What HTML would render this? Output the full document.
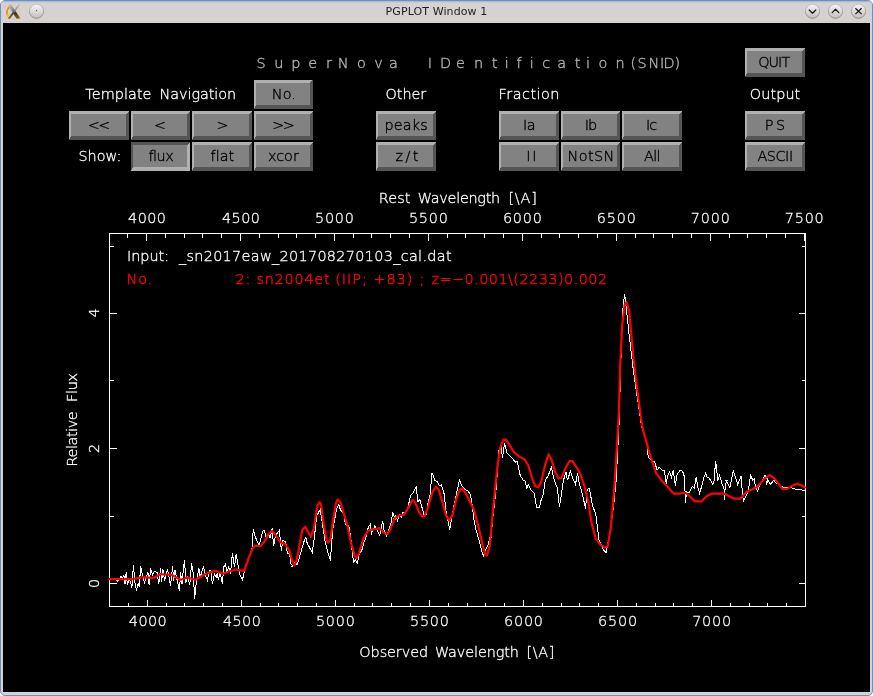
<!DOCTYPE html>
<html lang="en"><head><meta charset="utf-8"><title>PGPLOT Window 1</title>
<style>
html,body{margin:0;padding:0;background:#fff;}
body{width:873px;height:696px;overflow:hidden;position:relative;font-family:"DejaVu Sans Light", "DejaVu Sans", "Liberation Sans", sans-serif;}
#win{position:absolute;left:0;top:0;width:871px;height:694px;border:1px solid #6d8fc3;border-radius:5px;background:#d6d2d0;overflow:hidden;}
#topgrad{position:absolute;left:0;top:0;width:871px;height:2px;background:linear-gradient(#9db6d8,#d6d2d0);}
#ttl{position:absolute;left:0;top:0;width:873px;height:23px;line-height:23px;text-align:center;font-family:"DejaVu Sans","Liberation Sans",sans-serif;font-size:11px;letter-spacing:0.1px;color:#1e1e1e;will-change:transform;}
#cv{position:absolute;left:3px;top:23px;width:867px;height:669px;background:#000;}
svg{position:absolute;left:0;top:0;will-change:transform;}
svg text{font-family:"DejaVu Sans Light", "DejaVu Sans", "Liberation Sans", sans-serif;font-weight:200;font-size:14.4px;stroke-width:0.25px;}
.w{fill:#fff;stroke:#fff;stroke-width:0.3px;} .r{fill:#f00;stroke:#f00;stroke-width:0.45px;} .b{fill:#000;stroke:#000;stroke-width:0.35px;} .t{fill:#b0b0b0;stroke:#b0b0b0;stroke-width:0.4px;}
</style></head><body>
<div id="win"><div id="topgrad"></div></div>
<div id="ttl">PGPLOT Window 1</div>
<div id="cv"></div>
<svg width="873" height="23" viewBox="0 0 873 23">
<defs>
<linearGradient id="bg" x1="0" y1="0" x2="0" y2="1"><stop offset="0" stop-color="#f6f5f4"/><stop offset="0.5" stop-color="#dedbd9"/><stop offset="1" stop-color="#c2beba"/></linearGradient>
<linearGradient id="bs" x1="0" y1="0" x2="0" y2="1"><stop offset="0" stop-color="#c2beba"/><stop offset="1" stop-color="#8c8885"/></linearGradient>
<linearGradient id="xa" x1="0" y1="0" x2="1" y2="1"><stop offset="0" stop-color="#d0d0d0"/><stop offset="0.42" stop-color="#858585"/><stop offset="0.58" stop-color="#3a3222"/><stop offset="1" stop-color="#8f7410"/></linearGradient>
<linearGradient id="xb" x1="1" y1="0" x2="0" y2="1"><stop offset="0" stop-color="#c4c4c4"/><stop offset="0.45" stop-color="#8d8d8d"/><stop offset="0.6" stop-color="#4a3a22"/><stop offset="1" stop-color="#a06c08"/></linearGradient>
</defs>
<g fill="url(#bg)" stroke="url(#bs)" stroke-width="1">
<circle cx="36.5" cy="11.2" r="7.1"/><circle cx="812.5" cy="11.2" r="7.1"/><circle cx="835.5" cy="11.2" r="7.1"/><circle cx="858.5" cy="11.2" r="7.1"/>
</g>
<rect x="36" y="10.2" width="1" height="1.3" fill="#333"/><rect x="36" y="11.5" width="1" height="1" fill="#fff"/>
<g fill="none" stroke="#1c1c1c" stroke-width="1.3" stroke-linecap="round" stroke-linejoin="round">
<path d="M809.2 10 L812.5 13.3 L815.8 10"/>
<path d="M832.2 12.6 L835.5 9.3 L838.8 12.6"/>
<path d="M855.4 8.3 L861.6 14.1 M861.6 8.3 L855.4 14.1" stroke-linecap="butt"/>
</g>
<path d="M9 7.6 C6.2 10.2 6.2 14.4 8.8 17" fill="none" stroke="#f6820e" stroke-width="1.7" stroke-linecap="round"/>
<path d="M7.6 14.6 C8 15.8 8.6 16.6 9.6 17.4" fill="none" stroke="#ffd21e" stroke-width="1.2" stroke-linecap="round"/>
<path d="M19 8.2 C21 10.6 21 14 19.2 16.4" fill="none" stroke="#f3c078" stroke-width="0.8" stroke-linecap="round" opacity="0.85"/>
<path d="M7.6 4.8 L11 4.2 L20.4 18.2 L16.6 18.8 Z" fill="url(#xa)"/>
<path d="M18.8 4 L20.2 4.8 L10 18.8 L7.8 18.4 Z" fill="url(#xb)"/>

</svg>
<svg width="873" height="696" viewBox="0 0 873 696">
<g shape-rendering="crispEdges">
<rect x="254" y="79.5" width="59" height="29" fill="#828282"/>
<polygon points="254,79.5 313,79.5 310,82.5 256,82.5" fill="#b0b0b0"/>
<polygon points="254,79.5 256,82.5 256,104.5 254,108.5" fill="#b0b0b0"/>
<polygon points="254,108.5 256,104.5 310,104.5 313,108.5" fill="#555555"/>
<polygon points="313,79.5 313,108.5 310,104.5 310,82.5" fill="#555555"/>
<rect x="69" y="111" width="60" height="29" fill="#828282"/>
<polygon points="69,111 129,111 126,114 71,114" fill="#b0b0b0"/>
<polygon points="69,111 71,114 71,136 69,140" fill="#b0b0b0"/>
<polygon points="69,140 71,136 126,136 129,140" fill="#555555"/>
<polygon points="129,111 129,140 126,136 126,114" fill="#555555"/>
<rect x="131" y="111" width="59" height="29" fill="#828282"/>
<polygon points="131,111 190,111 187,114 133,114" fill="#b0b0b0"/>
<polygon points="131,111 133,114 133,136 131,140" fill="#b0b0b0"/>
<polygon points="131,140 133,136 187,136 190,140" fill="#555555"/>
<polygon points="190,111 190,140 187,136 187,114" fill="#555555"/>
<rect x="192" y="111" width="60" height="29" fill="#828282"/>
<polygon points="192,111 252,111 249,114 194,114" fill="#b0b0b0"/>
<polygon points="192,111 194,114 194,136 192,140" fill="#b0b0b0"/>
<polygon points="192,140 194,136 249,136 252,140" fill="#555555"/>
<polygon points="252,111 252,140 249,136 249,114" fill="#555555"/>
<rect x="254" y="111" width="59" height="29" fill="#828282"/>
<polygon points="254,111 313,111 310,114 256,114" fill="#b0b0b0"/>
<polygon points="254,111 256,114 256,136 254,140" fill="#b0b0b0"/>
<polygon points="254,140 256,136 310,136 313,140" fill="#555555"/>
<polygon points="313,111 313,140 310,136 310,114" fill="#555555"/>
<rect x="131" y="142" width="59" height="29" fill="#828282"/>
<polygon points="131,142 190,142 187,145 133,145" fill="#555555"/>
<polygon points="131,142 133,145 133,167 131,171" fill="#555555"/>
<polygon points="131,171 133,167 187,167 190,171" fill="#b0b0b0"/>
<polygon points="190,142 190,171 187,167 187,145" fill="#b0b0b0"/>
<rect x="192" y="142" width="60" height="29" fill="#828282"/>
<polygon points="192,142 252,142 249,145 194,145" fill="#b0b0b0"/>
<polygon points="192,142 194,145 194,167 192,171" fill="#b0b0b0"/>
<polygon points="192,171 194,167 249,167 252,171" fill="#555555"/>
<polygon points="252,142 252,171 249,167 249,145" fill="#555555"/>
<rect x="254" y="142" width="59" height="29" fill="#828282"/>
<polygon points="254,142 313,142 310,145 256,145" fill="#b0b0b0"/>
<polygon points="254,142 256,145 256,167 254,171" fill="#b0b0b0"/>
<polygon points="254,171 256,167 310,167 313,171" fill="#555555"/>
<polygon points="313,142 313,171 310,167 310,145" fill="#555555"/>
<rect x="376" y="111" width="60" height="29" fill="#828282"/>
<polygon points="376,111 436,111 433,114 378,114" fill="#b0b0b0"/>
<polygon points="376,111 378,114 378,136 376,140" fill="#b0b0b0"/>
<polygon points="376,140 378,136 433,136 436,140" fill="#555555"/>
<polygon points="436,111 436,140 433,136 433,114" fill="#555555"/>
<rect x="376" y="142" width="60" height="29" fill="#828282"/>
<polygon points="376,142 436,142 433,145 378,145" fill="#b0b0b0"/>
<polygon points="376,142 378,145 378,167 376,171" fill="#b0b0b0"/>
<polygon points="376,171 378,167 433,167 436,171" fill="#555555"/>
<polygon points="436,142 436,171 433,167 433,145" fill="#555555"/>
<rect x="499" y="111" width="60" height="29" fill="#828282"/>
<polygon points="499,111 559,111 556,114 501,114" fill="#b0b0b0"/>
<polygon points="499,111 501,114 501,136 499,140" fill="#b0b0b0"/>
<polygon points="499,140 501,136 556,136 559,140" fill="#555555"/>
<polygon points="559,111 559,140 556,136 556,114" fill="#555555"/>
<rect x="561" y="111" width="59" height="29" fill="#828282"/>
<polygon points="561,111 620,111 617,114 563,114" fill="#b0b0b0"/>
<polygon points="561,111 563,114 563,136 561,140" fill="#b0b0b0"/>
<polygon points="561,140 563,136 617,136 620,140" fill="#555555"/>
<polygon points="620,111 620,140 617,136 617,114" fill="#555555"/>
<rect x="622" y="111" width="60" height="29" fill="#828282"/>
<polygon points="622,111 682,111 679,114 624,114" fill="#b0b0b0"/>
<polygon points="622,111 624,114 624,136 622,140" fill="#b0b0b0"/>
<polygon points="622,140 624,136 679,136 682,140" fill="#555555"/>
<polygon points="682,111 682,140 679,136 679,114" fill="#555555"/>
<rect x="499" y="142" width="60" height="29" fill="#828282"/>
<polygon points="499,142 559,142 556,145 501,145" fill="#b0b0b0"/>
<polygon points="499,142 501,145 501,167 499,171" fill="#b0b0b0"/>
<polygon points="499,171 501,167 556,167 559,171" fill="#555555"/>
<polygon points="559,142 559,171 556,167 556,145" fill="#555555"/>
<rect x="561" y="142" width="59" height="29" fill="#828282"/>
<polygon points="561,142 620,142 617,145 563,145" fill="#b0b0b0"/>
<polygon points="561,142 563,145 563,167 561,171" fill="#b0b0b0"/>
<polygon points="561,171 563,167 617,167 620,171" fill="#555555"/>
<polygon points="620,142 620,171 617,167 617,145" fill="#555555"/>
<rect x="622" y="142" width="60" height="29" fill="#828282"/>
<polygon points="622,142 682,142 679,145 624,145" fill="#b0b0b0"/>
<polygon points="622,142 624,145 624,167 622,171" fill="#b0b0b0"/>
<polygon points="622,171 624,167 679,167 682,171" fill="#555555"/>
<polygon points="682,142 682,171 679,167 679,145" fill="#555555"/>
<rect x="745" y="48" width="60" height="29" fill="#828282"/>
<polygon points="745,48 805,48 802,51 747,51" fill="#b0b0b0"/>
<polygon points="745,48 747,51 747,73 745,77" fill="#b0b0b0"/>
<polygon points="745,77 747,73 802,73 805,77" fill="#555555"/>
<polygon points="805,48 805,77 802,73 802,51" fill="#555555"/>
<rect x="745" y="111" width="60" height="29" fill="#828282"/>
<polygon points="745,111 805,111 802,114 747,114" fill="#b0b0b0"/>
<polygon points="745,111 747,114 747,136 745,140" fill="#b0b0b0"/>
<polygon points="745,140 747,136 802,136 805,140" fill="#555555"/>
<polygon points="805,111 805,140 802,136 802,114" fill="#555555"/>
<rect x="745" y="142" width="60" height="29" fill="#828282"/>
<polygon points="745,142 805,142 802,145 747,145" fill="#b0b0b0"/>
<polygon points="745,142 747,145 747,167 745,171" fill="#b0b0b0"/>
<polygon points="745,171 747,167 802,167 805,171" fill="#555555"/>
<polygon points="805,142 805,171 802,167 802,145" fill="#555555"/>
</g>
<text x="271.80" y="98.5" class="b" style="letter-spacing:0.09px">No.</text>
<text x="87.87" y="130.0" class="b" style="letter-spacing:-1.60px">&lt;&lt;</text>
<text x="154.00" y="130.0" class="b">&lt;</text>
<text x="216.50" y="130.0" class="b">&gt;</text>
<text x="272.37" y="130.0" class="b" style="letter-spacing:-1.60px">&gt;&gt;</text>
<text x="148.40" y="161.0" class="b" style="letter-spacing:-0.46px">flux</text>
<text x="210.60" y="161.0" class="b" style="letter-spacing:0.04px">flat</text>
<text x="268.00" y="161.0" class="b" style="letter-spacing:-0.03px">xcor</text>
<text x="384.40" y="130.0" class="b" style="letter-spacing:0.21px">peaks</text>
<text x="395.45" y="161.0" class="b" style="letter-spacing:2.50px">z/t</text>
<text x="522.90" y="130.0" class="b" style="letter-spacing:-0.44px">Ia</text>
<text x="584.80" y="130.0" class="b" style="letter-spacing:-0.94px">Ib</text>
<text x="645.90" y="130.0" class="b" style="letter-spacing:-0.94px">Ic</text>
<text x="526.20" y="161.0" class="b" style="letter-spacing:1.76px">II</text>
<text x="567.60" y="161.0" class="b" style="letter-spacing:0.41px">NotSN</text>
<text x="644.00" y="161.0" class="b" style="letter-spacing:-0.67px">All</text>
<text x="758.20" y="67.0" class="b" style="letter-spacing:-0.97px">QUIT</text>
<text x="764.71" y="130.0" class="b" style="letter-spacing:2.50px">PS</text>
<text x="757.50" y="161.0" class="b" style="letter-spacing:-0.47px">ASCII</text>
<text x="85.30" y="99.0" class="w" style="letter-spacing:0.07px">Template</text>
<text x="159.60" y="99.0" class="w" style="letter-spacing:-0.06px">Navigation</text>
<text x="78.40" y="160.8" class="w" style="letter-spacing:0.04px">Show:</text>
<text x="385.60" y="99.0" class="w" style="letter-spacing:-0.09px">Other</text>
<text x="498.60" y="99.0" class="w" style="letter-spacing:0.48px">Fraction</text>
<text x="749.80" y="99.0" class="w" style="letter-spacing:0.09px">Output</text>
<text x="128.82" y="625.6" class="w" style="letter-spacing:0.44px">4000</text>
<text x="222.88" y="625.6" class="w" style="letter-spacing:0.44px">4500</text>
<text x="315.93" y="625.6" class="w" style="letter-spacing:0.78px">5000</text>
<text x="409.99" y="625.6" class="w" style="letter-spacing:0.78px">5500</text>
<text x="504.04" y="625.6" class="w" style="letter-spacing:0.78px">6000</text>
<text x="598.10" y="625.6" class="w" style="letter-spacing:0.78px">6500</text>
<text x="692.15" y="625.6" class="w" style="letter-spacing:0.78px">7000</text>
<text x="128.07" y="223.2" class="w" style="letter-spacing:0.44px">4000</text>
<text x="222.03" y="223.2" class="w" style="letter-spacing:0.44px">4500</text>
<text x="314.99" y="223.2" class="w" style="letter-spacing:0.78px">5000</text>
<text x="408.95" y="223.2" class="w" style="letter-spacing:0.78px">5500</text>
<text x="502.91" y="223.2" class="w" style="letter-spacing:0.78px">6000</text>
<text x="596.87" y="223.2" class="w" style="letter-spacing:0.78px">6500</text>
<text x="690.84" y="223.2" class="w" style="letter-spacing:0.78px">7000</text>
<text x="784.80" y="223.2" class="w" style="letter-spacing:0.78px">7500</text>
<text transform="translate(99.0,587.0) rotate(-90)" x="-1.00" y="0" class="w">0</text>
<text transform="translate(99.0,453.0) rotate(-90)" x="0.00" y="0" class="w">2</text>
<text transform="translate(99.0,318.0) rotate(-90)" x="0.50" y="0" class="w">4</text>
<text x="359.30" y="657.0" class="w" style="letter-spacing:-0.06px">Observed</text>
<text x="434.90" y="657.0" class="w" style="letter-spacing:-0.09px">Wavelength</text>
<text x="526.60" y="657.0" class="w" style="letter-spacing:0.63px">[\A]</text>
<text x="378.80" y="203.4" class="w" style="letter-spacing:0.07px">Rest</text>
<text x="417.70" y="203.4" class="w" style="letter-spacing:-0.26px">Wavelength</text>
<text x="508.40" y="203.4" class="w" style="letter-spacing:0.83px">[\A]</text>
<text transform="translate(76.7,465.5) rotate(-90)" x="-1.00" y="0" class="w" style="letter-spacing:-0.41px">Relative</text>
<text transform="translate(76.7,465.5) rotate(-90)" x="63.40" y="0" class="w" style="letter-spacing:-0.27px">Flux</text>
<text x="126.90" y="260.8" class="w" style="letter-spacing:0.01px">Input:</text>
<text x="178.90" y="260.8" class="w" style="letter-spacing:0.32px">_sn2017eaw_201708270103_cal.dat</text>
<text x="126.60" y="284.1" class="r" style="letter-spacing:0.89px">No.</text>
<text x="235.60" y="284.1" class="r" style="letter-spacing:0.77px">2: sn2004et</text>
<text x="335.20" y="284.1" class="r" style="letter-spacing:1.00px">(IIP; +83)</text>
<text x="419.50" y="284.1" class="r">;</text>
<text x="431.40" y="284.1" class="r" style="letter-spacing:0.47px">z=−0.001\(2233)0.002</text>
<text x="256.6 262.6 274.2 280.2 291.3 297.3 308.2 314.2 325.9 331.9 337.7 343.7 356.9 362.9 374.2 380.2 388.9 394.9 400.9 406.9 427.7 433.7 440.0 446.0 456.1 462.1 474.0 480.0 491.8 497.8 504.7 510.7 516.5 522.5 529.7 535.7 542.2 548.2 557.3 563.3 574.7 580.7 586.0 592.0 598.4 604.4 615.4 621.4 630.5 637.5 648.5 660.0 663.6 674.6" y="68.3" class="t" style="white-space:pre">S u p e r N o v a   I D e n t i f i c a t i o n (SNID)</text>
<g shape-rendering="crispEdges" stroke="#fff" stroke-width="1" fill="none">
<rect x="109.5" y="233.5" width="696.0" height="373.0"/>
<path d="M128.5,606.5v-4 M147.5,606.5v-7 M166.5,606.5v-4 M184.5,606.5v-4 M203.5,606.5v-4 M222.5,606.5v-4 M241.5,606.5v-7 M260.5,606.5v-4 M278.5,606.5v-4 M297.5,606.5v-4 M316.5,606.5v-4 M335.5,606.5v-7 M354.5,606.5v-4 M372.5,606.5v-4 M391.5,606.5v-4 M410.5,606.5v-4 M429.5,606.5v-7 M448.5,606.5v-4 M467.5,606.5v-4 M485.5,606.5v-4 M504.5,606.5v-4 M523.5,606.5v-7 M542.5,606.5v-4 M561.5,606.5v-4 M579.5,606.5v-4 M598.5,606.5v-4 M617.5,606.5v-7 M636.5,606.5v-4 M655.5,606.5v-4 M673.5,606.5v-4 M692.5,606.5v-4 M711.5,606.5v-7 M730.5,606.5v-4 M749.5,606.5v-4 M767.5,606.5v-4 M786.5,606.5v-4 M127.5,233.5v4 M146.5,233.5v7 M165.5,233.5v4 M184.5,233.5v4 M202.5,233.5v4 M221.5,233.5v4 M240.5,233.5v7 M259.5,233.5v4 M278.5,233.5v4 M296.5,233.5v4 M315.5,233.5v4 M334.5,233.5v7 M353.5,233.5v4 M371.5,233.5v4 M390.5,233.5v4 M409.5,233.5v4 M428.5,233.5v7 M447.5,233.5v4 M465.5,233.5v4 M484.5,233.5v4 M503.5,233.5v4 M522.5,233.5v7 M541.5,233.5v4 M559.5,233.5v4 M578.5,233.5v4 M597.5,233.5v4 M616.5,233.5v7 M635.5,233.5v4 M653.5,233.5v4 M672.5,233.5v4 M691.5,233.5v4 M710.5,233.5v7 M729.5,233.5v4 M747.5,233.5v4 M766.5,233.5v4 M785.5,233.5v4 M804.5,233.5v7 M109.5,583.5h7 M805.5,583.5h-7 M109.5,516.5h4 M805.5,516.5h-4 M109.5,448.5h7 M805.5,448.5h-7 M109.5,380.5h4 M805.5,380.5h-4 M109.5,313.5h7 M805.5,313.5h-7 M109.5,246.5h4 M805.5,246.5h-4"/>
</g>
<polyline points="115.9,579.9 117.6,581.1 119.3,579.4 121.0,575.9 122.2,579.4 123.9,574.8 125.0,583.9 126.2,572.5 127.3,583.9 129.6,579.4 131.9,587.4 133.4,565.4 135.0,582.8 136.5,590.8 138.2,582.8 139.4,587.4 140.5,566.2 142.2,573.6 144.5,583.4 145.7,578.2 148.0,572.5 149.1,584.5 150.6,568.5 152.5,574.8 154.3,571.3 157.1,572.5 158.8,583.9 160.6,568.5 161.7,581.7 162.8,569.1 164.6,580.5 167.4,569.6 168.6,574.8 170.5,585.7 172.6,566.2 173.7,580.5 174.9,569.6 177.7,582.8 179.5,590.8 180.6,572.5 182.0,583.9 183.5,567.9 184.6,559.9 185.8,582.8 187.5,575.9 189.8,585.1 191.5,563.3 193.2,573.6 194.7,598.8 196.1,583.9 198.9,568.5 200.1,578.2 201.8,571.3 203.5,566.2 203.4,566.0 205.2,575.2 207.5,580.3 209.2,570.6 210.9,571.1 212.4,584.4 214.4,574.0 216.1,577.5 217.2,574.0 218.4,579.8 220.1,571.7 222.4,584.4 223.6,567.1 225.5,564.3 227.0,571.7 228.7,567.1 230.5,574.0 232.4,553.3 234.5,567.1 236.2,553.9 238.5,568.3 239.7,574.0 242.5,579.8 244.3,571.7 246.0,566.0 249.4,556.8 252.3,547.6 252.6,537.2 253.4,529.2 254.9,536.1 259.2,545.3 262.6,531.5 264.4,530.3 266.1,537.2 269.0,534.9 270.1,538.4 272.2,528.0 273.6,546.4 275.3,536.1 279.3,530.3 281.4,550.5 282.8,540.7 285.6,541.3 287.4,553.3 289.7,554.5 290.8,563.7 293.1,566.0 292.2,566.2 295.0,562.6 297.2,564.8 299.3,557.6 302.2,547.5 304.4,540.3 305.8,537.5 307.2,543.2 312.3,552.6 314.4,537.5 316.6,515.9 320.2,509.5 322.3,523.1 325.2,541.8 328.1,553.3 330.5,560.5 331.7,541.8 333.1,527.4 336.7,508.7 338.9,504.4 340.3,509.5 343.9,514.5 345.3,524.5 348.9,526.0 351.1,540.3 352.5,554.7 353.9,562.6 355.4,559.7 357.5,563.3 359.0,554.7 361.8,550.4 364.0,541.8 365.4,538.9 368.3,527.4 370.2,524.5 371.6,533.2 374.8,526.0 376.9,529.6 379.8,535.3 382.7,520.9 384.1,530.3 386.6,536.0 389.1,528.9 391.3,521.7 392.7,512.3 394.9,518.8 393.7,518.4 395.6,515.6 397.5,520.3 399.3,514.7 401.2,517.5 403.1,511.9 404.9,513.8 407.7,508.2 410.5,496.0 413.3,492.3 416.1,486.7 418.0,501.6 419.9,499.8 422.7,510.0 424.6,516.6 426.4,514.7 428.3,501.6 430.2,494.2 432.0,472.7 434.8,480.2 437.6,482.0 439.5,485.8 441.4,484.8 444.2,494.2 446.0,511.0 447.9,520.3 449.8,529.7 451.6,518.4 454.4,503.5 457.2,490.4 459.5,480.2 461.9,485.8 464.7,489.5 467.5,490.4 470.3,494.2 472.2,505.4 474.0,520.3 475.9,529.7 478.7,539.0 481.5,550.2 483.4,555.8 485.3,550.2 488.1,544.6 489.9,537.1 491.0,538.6 493.0,516.5 496.0,490.4 499.0,450.2 501.1,446.1 502.5,458.2 504.5,443.1 507.1,453.2 510.1,456.2 513.1,459.2 515.1,462.2 517.1,461.2 520.2,475.3 523.2,480.3 525.2,481.3 526.8,488.4 528.2,484.3 531.2,490.4 534.2,493.4 536.7,507.5 539.3,507.5 541.3,499.4 543.3,494.4 545.3,480.3 548.3,475.3 551.3,467.3 554.3,480.3 557.4,488.4 559.4,506.5 561.4,494.4 563.4,480.3 566.0,472.3 567.4,480.3 570.4,471.3 572.8,478.3 575.5,484.3 577.5,473.3 579.5,484.3 582.5,494.4 585.5,508.5 587.2,489.4 589.3,488.3 592.5,505.5 595.8,514.1 597.9,531.4 599.0,540.0 603.3,549.7 606.1,552.9 607.6,544.3 610.9,527.1 614.1,501.2 616.2,479.7 617.3,458.1 619.1,423.7 620.2,385.5 621.8,331.2 623.2,305.1 624.6,294.0 626.2,307.1 629.2,335.3 632.6,364.4 634.6,379.5 638.2,403.6 641.5,425.8 647.5,445.2 648.1,457.0 651.8,460.3 652.8,461.7 654.7,461.7 657.0,470.1 659.3,467.3 662.1,470.1 664.5,471.0 666.3,483.6 667.7,475.2 669.6,471.9 671.5,477.1 673.3,470.5 675.4,485.5 677.1,474.3 680.3,470.1 682.7,471.5 684.5,477.1 685.5,503.2 686.4,492.0 689.2,493.0 692.5,486.4 694.4,488.3 696.2,476.6 697.6,486.4 699.5,493.0 701.4,487.3 703.7,478.0 705.6,473.3 707.0,477.1 709.3,478.0 712.6,484.5 714.4,479.9 715.4,461.2 716.5,466.8 717.7,480.8 719.6,475.2 721.9,483.6 724.2,489.2 724.7,499.5 725.2,485.5 727.0,480.8 726.0,480.7 729.9,487.5 733.3,470.4 737.7,484.6 741.1,476.3 742.5,494.8 743.5,500.6 747.9,492.8 748.9,487.0 750.5,475.3 752.8,480.2 754.2,478.7 755.7,488.0 757.6,491.4 758.6,488.0 762.0,481.2 764.9,475.3 767.4,479.2 766.4,484.6 767.8,480.2 770.3,484.6 773.7,480.2 775.6,482.6 779.5,485.1 783.4,487.5 788.3,487.0 793.2,488.5 797.1,489.4 805.6,490.4" fill="none" stroke="#fff" stroke-width="1" shape-rendering="crispEdges"/>
<polyline points="108.4,579.1 132.5,579.1 142.8,577.1 153.1,578.2 160.0,574.2 171.4,574.8 180.6,579.7 187.5,577.6 195.5,579.7 203.5,575.0 206.9,573.4 215.5,570.9 223.0,573.8 228.7,571.7 235.6,569.2 240.2,570.6 244.3,570.6 248.3,559.1 252.9,547.6 255.2,545.9 260.9,545.9 264.4,541.8 268.4,533.8 272.2,530.9 275.9,535.5 280.5,542.4 285.1,544.1 289.1,549.9 292.0,560.2 294.3,565.4 296.5,560.5 298.6,550.4 302.2,530.3 305.1,526.7 308.0,531.7 310.8,536.8 313.7,528.9 317.3,505.9 319.5,502.3 320.9,503.7 323.8,524.5 326.6,540.3 328.1,542.5 330.2,540.3 333.1,520.2 336.0,503.0 337.8,499.4 340.3,502.3 343.9,513.8 347.5,526.0 351.1,543.2 354.7,556.1 356.4,558.3 359.0,553.3 363.3,538.9 367.6,531.0 371.9,529.6 376.2,528.9 379.8,528.1 383.4,532.4 387.0,534.3 389.9,530.3 393.4,521.7 394.7,518.4 398.4,515.6 404.0,514.7 408.7,507.2 412.4,500.1 415.2,502.6 419.0,511.9 421.8,516.2 424.6,516.2 427.4,509.1 432.0,493.2 435.8,486.7 438.6,489.5 442.3,501.6 446.0,515.6 449.4,520.7 452.6,514.7 456.3,498.8 460.0,489.5 462.5,488.2 465.6,493.2 469.4,500.7 474.0,510.0 478.7,527.8 482.5,544.6 485.3,554.9 487.1,555.4 489.9,544.6 493.0,510.5 497.0,470.3 500.1,448.2 503.1,440.1 506.1,439.7 510.1,446.1 514.1,452.2 519.2,456.6 524.2,459.2 528.2,465.2 532.2,478.3 535.2,486.0 538.3,487.4 541.3,481.3 545.3,464.2 548.7,454.2 551.3,459.2 555.4,472.3 558.4,478.3 561.4,477.9 565.4,468.3 569.4,461.2 572.4,461.2 576.5,467.3 580.5,474.3 584.5,486.4 588.2,501.2 591.5,522.8 595.8,538.9 601.2,545.4 605.5,547.5 607.6,546.5 610.9,527.1 614.1,490.4 616.9,447.3 618.8,415.0 620.2,365.4 622.2,325.2 624.6,305.1 626.6,302.1 629.2,311.1 633.2,355.4 637.2,389.5 641.9,424.9 644.3,434.4 649.7,453.8 652.8,463.1 656.1,473.3 661.2,479.9 666.8,485.9 673.8,493.7 680.3,493.7 681.7,493.0 685.9,493.0 690.1,496.7 694.8,501.4 701.4,501.4 706.0,496.7 711.2,493.7 724.7,493.7 729.9,496.7 734.7,498.7 740.1,498.7 746.4,491.9 757.1,487.0 763.9,479.2 769.8,475.1 774.7,478.7 782.4,488.9 787.3,488.9 793.2,485.1 797.5,483.9 801.9,485.5 805.6,488.0" fill="none" stroke="#f00" stroke-width="2.2" stroke-linejoin="round" stroke-linecap="butt"/>
</svg>
</body></html>
